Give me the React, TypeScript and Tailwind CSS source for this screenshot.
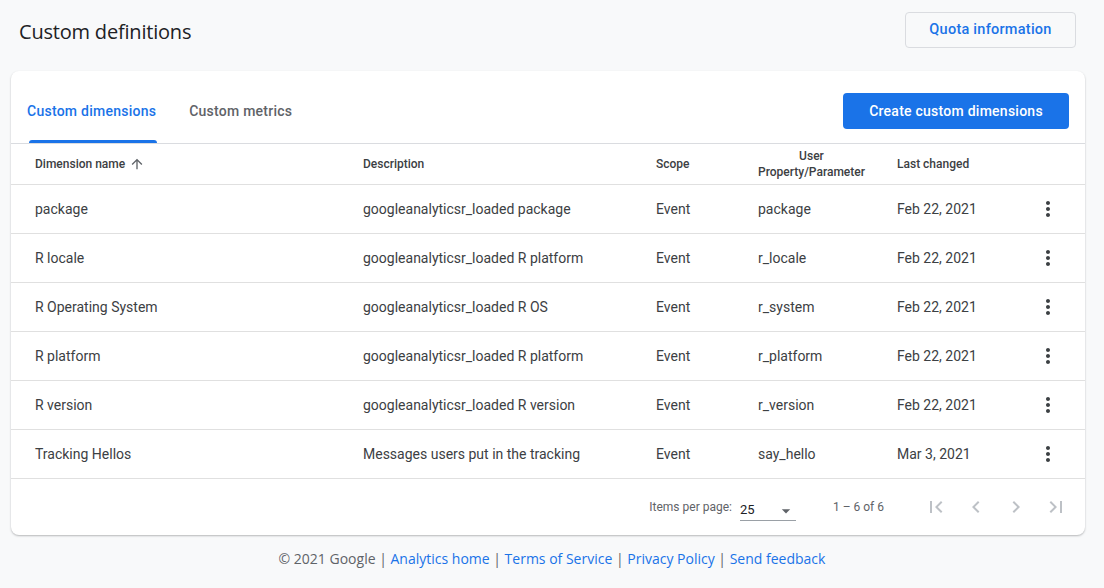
import React from 'react';

const rows = [
  { name: 'package', desc: 'googleanalyticsr_loaded package', scope: 'Event', param: 'package', changed: 'Feb 22, 2021' },
  { name: 'R locale', desc: 'googleanalyticsr_loaded R platform', scope: 'Event', param: 'r_locale', changed: 'Feb 22, 2021' },
  { name: 'R Operating System', desc: 'googleanalyticsr_loaded R OS', scope: 'Event', param: 'r_system', changed: 'Feb 22, 2021' },
  { name: 'R platform', desc: 'googleanalyticsr_loaded R platform', scope: 'Event', param: 'r_platform', changed: 'Feb 22, 2021' },
  { name: 'R version', desc: 'googleanalyticsr_loaded R version', scope: 'Event', param: 'r_version', changed: 'Feb 22, 2021' },
  { name: 'Tracking Hellos', desc: 'Messages users put in the tracking', scope: 'Event', param: 'say_hello', changed: 'Mar 3, 2021' },
];

const Icon = ({ d, className }: { d: string; className?: string }) => (
  <svg viewBox="0 0 24 24" className={className} fill="currentColor">
    <path d={d} />
  </svg>
);

const cols = 'grid grid-cols-[328px_293px_102px_139px_1fr_56px]';

export default function App() {
  return (
    <div className="w-[1104px] h-[588px] bg-[#f8f9fa] text-[#3c4043] font-['Roboto',sans-serif] overflow-hidden">
      <div className="flex items-start justify-between pl-[19px] pr-[28px] pt-[12px] h-[71px]">
        <h1 className="mt-[5px] font-['Open_Sans',sans-serif] text-[20px] leading-[30px] text-[#202124] tracking-[-0.2px]">Custom definitions</h1>
        <button className="h-[36px] w-[171px] border border-[#dadce0] rounded-[4px] bg-[#f8f9fa] text-[#1a73e8] text-[14.5px] font-medium tracking-[0.25px]">
          Quota information
        </button>
      </div>

      <div className="ml-[11px] w-[1074px] bg-white rounded-[8px] shadow-[0_1px_2px_rgba(60,64,67,0.35)] h-[464px] flex flex-col">
        <div className="flex items-end justify-between h-[73px] border-b border-[#dadce0] pr-[16px]">
          <div className="flex items-end h-full pl-[16px] gap-[33px]">
            <div className="relative h-full flex items-center pt-[8px]">
              <span className="text-[#1a73e8] text-[14px] font-medium tracking-[0.25px]">Custom dimensions</span>
              <div className="absolute bottom-0 left-[2px] right-[-1px] h-[3px] bg-[#1a73e8] rounded-t-[3px]" />
            </div>
            <div className="h-full flex items-center pt-[8px]">
              <span className="text-[#5f6368] text-[14px] font-medium tracking-[0.25px]">Custom metrics</span>
            </div>
          </div>
          <button className="mb-[14px] h-[36px] w-[226px] rounded-[4px] bg-[#1a73e8] text-white text-[14px] font-medium tracking-[0.25px]">
            Create custom dimensions
          </button>
        </div>

        <div className={`${cols} h-[41px] items-center border-b border-[#e0e0e0] text-[12px] font-medium text-[#3c4043] pl-[24px]`}>
          <div className="flex items-center gap-[4px]">
            Dimension name
            <Icon className="w-[16px] h-[16px] text-[#5f6368]" d="M4 12l1.41 1.41L11 7.83V20h2V7.83l5.58 5.59L20 12l-8-8-8 8z" />
          </div>
          <div>Description</div>
          <div>Scope</div>
          <div>
            <div className="inline-block text-center leading-[16px]">User<br />Property/Parameter</div>
          </div>
          <div>Last changed</div>
          <div />
        </div>

        {rows.map((r) => (
          <div key={r.name} className={`${cols} h-[49px] items-center border-b border-[#e0e0e0] text-[14px] text-[#3c4043] pl-[24px]`}>
            <div>{r.name}</div>
            <div>{r.desc}</div>
            <div>{r.scope}</div>
            <div>{r.param}</div>
            <div>{r.changed}</div>
            <div className="flex justify-start pl-[7px]">
              <Icon className="w-[24px] h-[24px] text-[#3c4043]" d="M12 8c1.1 0 2-.9 2-2s-.9-2-2-2-2 .9-2 2 .9 2 2 2zm0 2c-1.1 0-2 .9-2 2s.9 2 2 2 2-.9 2-2-.9-2-2-2zm0 6c-1.1 0-2 .9-2 2s.9 2 2 2 2-.9 2-2-.9-2-2-2z" />
            </div>
          </div>
        ))}

        <div className="flex-1 flex items-center justify-end pr-[17px] text-[12px] text-[#5f6368]">
          <span className="mr-[8px]">Items per page:</span>
          <div className="w-[56px] h-[22px] border-b border-[#9aa0a6] flex items-end justify-between mt-[6px] mr-[37px]">
            <span className="text-[13px] text-[#202124] pb-[1px]">25</span>
            <Icon className="w-[20px] h-[20px] text-[#5f6368] mb-[-1px]" d="M7 10l5 5 5-5z" />
          </div>
          <span className="mr-[40px]">1 – 6 of 6</span>
          <div className="flex items-center gap-[16px] text-[#bdc1c6]">
            <Icon className="w-[24px] h-[24px]" d="M18.41 16.59L13.82 12l4.59-4.59L17 6l-6 6 6 6zM6 6h2v12H6z" />
            <Icon className="w-[24px] h-[24px]" d="M15.41 7.41L14 6l-6 6 6 6 1.41-1.41L10.83 12z" />
            <Icon className="w-[24px] h-[24px]" d="M10 6L8.59 7.41 13.17 12l-4.58 4.59L10 18l6-6z" />
            <Icon className="w-[24px] h-[24px]" d="M5.59 7.41L10.18 12l-4.59 4.59L7 18l6-6-6-6zM16 6h2v12h-2z" />
          </div>
        </div>
      </div>

      <div className="flex justify-center mt-[13px] text-[14px] font-['Open_Sans',sans-serif] text-[#5f6368]">
        <span>© 2021 Google |&nbsp;</span>
        <span className="text-[#1a73e8]">Analytics home</span>
        <span>&nbsp;|&nbsp;</span>
        <span className="text-[#1a73e8]">Terms of Service</span>
        <span>&nbsp;|&nbsp;</span>
        <span className="text-[#1a73e8]">Privacy Policy</span>
        <span>&nbsp;|&nbsp;</span>
        <span className="text-[#1a73e8]">Send feedback</span>
      </div>
    </div>
  );
}
